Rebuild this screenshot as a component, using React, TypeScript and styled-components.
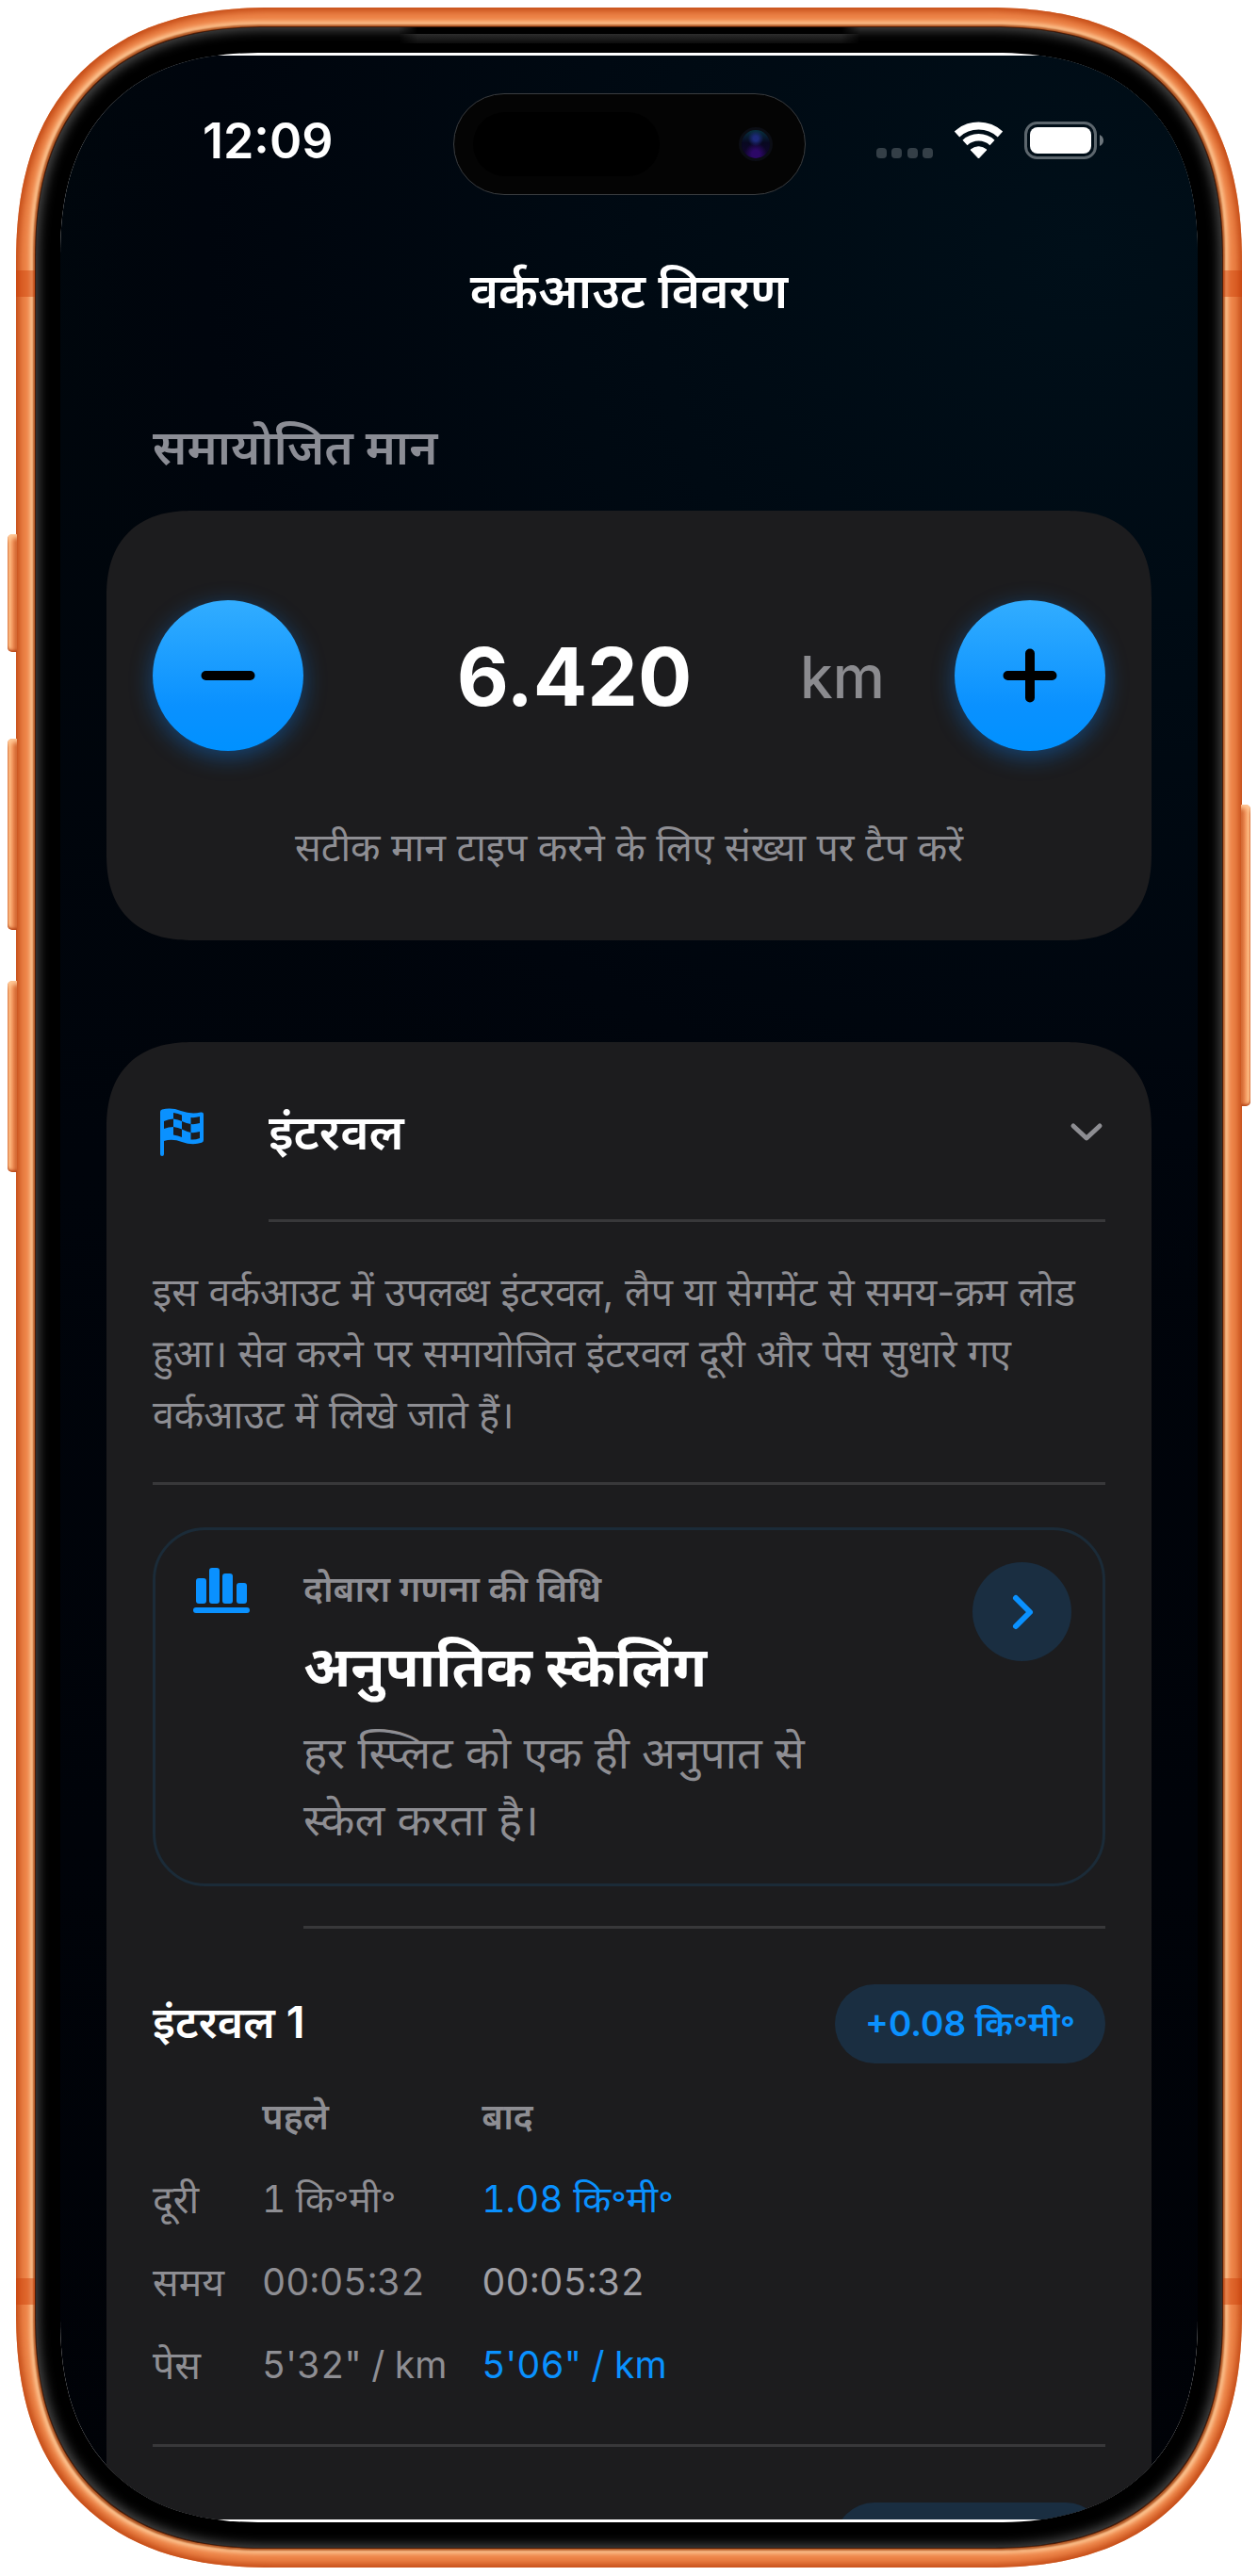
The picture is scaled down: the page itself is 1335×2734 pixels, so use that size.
import React from "react";
import styled, { createGlobalStyle, css } from "styled-components";

const blue = "#0a91ff";
const gray = "#8e8e93";
const tint = "#1a2e41";
const line = "#38383a";

const GlobalStyle = createGlobalStyle`
  *, *::before, *::after { box-sizing: border-box; }
  body {
    margin: 0;
    background: #fff;
    color: #fff;
    font-family: Inter, "Noto Sans Devanagari", "Noto Sans", "Lohit Devanagari", sans-serif;
    -webkit-font-smoothing: antialiased;
  }
  h1, h2, h3, p { margin: 0; }
  button, input { font: inherit; color: inherit; border: 0; margin: 0; padding: 0; }
  button { cursor: pointer; }
  svg { display: block; }
`;

// Continuous corners where the browser can draw them, plain arcs elsewhere.
const corners = (arc: number, smooth: number) => css`
  border-radius: ${arc}px;
  @supports (corner-shape: superellipse(1.25)) {
    border-radius: ${smooth}px;
    corner-shape: superellipse(1.25);
  }
`;

const Stage = styled.div`
  display: flex;
  height: 100vh;
  padding: 8px 17px 9px;
`;

const Phone = styled.div`
  position: relative;
  flex: 1;
  display: flex;
  padding: 21px;
  ${corners(240, 272)}
  background: #ee8549;
  box-shadow: inset 0 0 7px 4px #c44c17;
`;

const SideKey = styled.div<{ $side: "left" | "right"; $top: number; $height: number }>`
  position: absolute;
  top: ${(p) => p.$top}px;
  ${(p) => p.$side}: -9px;
  width: 10px;
  height: ${(p) => p.$height}px;
  border-radius: ${(p) => (p.$side === "left" ? "5px 0 0 5px" : "0 5px 5px 0")};
  background: linear-gradient(
    to ${(p) => p.$side},
    #c9551f,
    #f0925a 45%,
    #ffbd83 80%,
    #d4682f
  );
  box-shadow: inset 0 -4px 3px -2px #b8481a, inset 0 6px 5px -2px #ffc896;
`;

const Antenna = styled.div<{ $side: "left" | "right"; $edge: "top" | "bottom" }>`
  position: absolute;
  ${(p) => p.$side}: 0;
  ${(p) => p.$edge}: 279px;
  width: 20px;
  height: 28px;
  background: rgba(205, 62, 6, 0.45);
`;

const Bezel = styled.div`
  position: relative;
  flex: 1;
  display: flex;
  padding: 27px 26px;
  ${corners(219, 246)}
  background: #000;
  box-shadow: 0 0 0 1px #4a1c08, 0 0 2px 3px #b55a26, 0 0 5px 6px #ffcd9a,
    inset 0 0 12px 3px #4a4a4a;
`;

const Earpiece = styled.div`
  position: absolute;
  top: 0;
  left: 50%;
  width: 490px;
  height: 17px;
  transform: translateX(-50%);
  border-top: 7px solid #000;
  background: linear-gradient(#2c2c2c, #0c0c0c);
  mask-image: linear-gradient(to right, transparent, #000 20px calc(100% - 20px), transparent);
`;

const Glass = styled.div`
  flex: 1;
  display: flex;
  min-width: 0;
  padding: 3px 0;
  ${corners(186, 216)}
  overflow: hidden;
  background: #fff;
`;

const Screen = styled.div`
  flex: 1;
  min-width: 0;
  padding-top: 40px;
  overflow: hidden;
  background: radial-gradient(ellipse 1100px 1100px at 90% 8%, #000f19, #00050d 85%, transparent),
    linear-gradient(#00070d, #00040b 45%, #000207);
`;

const StatusBar = styled.div`
  display: grid;
  grid-template-columns: 1fr 374px 1fr;
  height: 108px;
`;

const Time = styled.div`
  display: flex;
  align-items: center;
  justify-content: center;
  padding: 0 0 8px 24px;
  font-size: 52px;
  font-weight: 600;
`;

const StatusIcons = styled.div`
  display: flex;
  align-items: center;
  justify-content: center;
  padding: 0 24px 8px 0;
`;

const Island = styled.div`
  display: flex;
  align-items: center;
  justify-content: space-between;
  padding: 0 34px 0 20px;
  border-radius: 54px;
  background: #040404;
  border: 1px solid #3a3d40;
`;

const Sensor = styled.div`
  width: 198px;
  height: 68px;
  border-radius: 34px;
  background: #000;
`;

const Lens = styled.div`
  width: 36px;
  height: 36px;
  border: 3px solid #0b0d14;
  border-radius: 50%;
  background: radial-gradient(circle at 50% 30%, #1d2a7a 0 10%, transparent 32%),
    radial-gradient(circle at 50% 85%, #2c0866 0 14%, transparent 40%),
    linear-gradient(#08303f, #080820 45%, #120530);
`;

const Title = styled.h1`
  margin-top: 66px;
  font-size: 52px;
  line-height: 72px;
  font-weight: 600;
  text-align: center;
`;

const Main = styled.main`
  padding: 0 49px;
`;

const SectionTitle = styled.h2`
  padding: 94px 49px 31px;
  color: #8b8d95;
  font-size: 51px;
  line-height: 72px;
  font-weight: 600;
`;

const Card = styled.section`
  padding: 0 49px;
  ${corners(82, 92)}
  background: #1c1c1e;
  & + & { margin-top: 108px; }
`;

const Stepper = styled.div`
  display: flex;
  align-items: center;
  padding-top: 95px;
`;

const RoundButton = styled.button`
  display: grid;
  place-items: center;
  flex: none;
  width: 160px;
  height: 160px;
  border-radius: 50%;
  background: linear-gradient(#32adff, #0a91ff 70%, #0091ff);
  box-shadow: 0 6px 24px rgba(10, 132, 255, 0.4);
`;

const ValueInput = styled.input`
  flex: 1;
  min-width: 0;
  margin-left: 48px;
  padding-top: 4px;
  background: transparent;
  color: #fff;
  font-size: 85px;
  line-height: 100px;
  font-weight: 700;
  text-align: center;
  outline: 0;
`;

const Unit = styled.label`
  flex: none;
  width: 116px;
  margin-right: 48px;
  padding-top: 4px;
  color: #8b8b8f;
  font-size: 62px;
  line-height: 100px;
  font-weight: 500;
`;

const Hint = styled.p`
  padding: 68px 0 64px;
  color: ${gray};
  font-size: 41px;
  line-height: 69px;
  text-align: center;
`;

const CardHeader = styled.button`
  display: flex;
  align-items: center;
  width: 100%;
  height: 188px;
  padding-top: 4px;
  background: none;
  text-align: left;
`;

const HeaderIcon = styled.span`
  width: 123px;
  padding-left: 8px;
`;

const HeaderText = styled.span`
  flex: 1;
  font-size: 52px;
  line-height: 72px;
  font-weight: 600;
`;

const Divider = styled.hr<{ $inset?: number }>`
  height: 3px;
  margin: 0 0 0 ${(p) => p.$inset ?? 0}px;
  border: 0;
  background: ${line};
`;

const Note = styled.p`
  padding: 42px 0 39px;
  color: ${gray};
  font-size: 41px;
  line-height: 65px;
`;

const Method = styled.button`
  display: flex;
  align-items: flex-start;
  width: 100%;
  margin: 45px 0 42px;
  padding: 34px 33px 33px 40px;
  border: 3px solid #1b2b38;
  border-radius: 56px;
  background: none;
  text-align: left;
`;

const MethodIcon = styled.span`
  flex: none;
  width: 117px;
  padding-top: 5px;
`;

const MethodText = styled.span`
  flex: 1;
  display: flex;
  flex-direction: column;
  min-width: 0;
  padding-right: 160px;
`;

const MethodLabel = styled.span`
  color: ${gray};
  font-size: 38px;
  line-height: 56px;
  font-weight: 600;
`;

const MethodName = styled.span`
  font-size: 59px;
  line-height: 110px;
  font-weight: 700;
`;

const MethodNote = styled.span`
  color: ${gray};
  font-size: 47px;
  line-height: 71px;
`;

const Go = styled.span`
  display: grid;
  place-items: center;
  flex: none;
  width: 105px;
  height: 105px;
  border-radius: 50%;
  background: ${tint};
`;

const IntervalHead = styled.div`
  display: flex;
  align-items: center;
  justify-content: space-between;
  padding-top: 59px;
`;

const IntervalName = styled.h3`
  padding-bottom: 4px;
  font-size: 47px;
  line-height: 64px;
  font-weight: 600;
`;

const Pill = styled.span`
  display: grid;
  place-items: center;
  min-width: 287px;
  height: 84px;
  padding: 0 32px;
  border-radius: 42px;
  background: ${tint};
  color: ${blue};
  font-size: 37px;
  line-height: 60px;
  font-weight: 600;
`;

const Table = styled.table`
  margin: 12px 0 40px;
  border-collapse: collapse;
  color: ${gray};
  font-size: 39px;
  line-height: 88px;
  font-variant-numeric: tabular-nums;
  th, td {
    height: 88px;
    padding: 0 37px 0 0;
    font-weight: 400;
    text-align: left;
    white-space: nowrap;
  }
  tbody th {
    padding-right: 40px;
    font-size: 41px;
  }
  thead th {
    font-size: 38px;
    font-weight: 600;
  }
`;

const Cell = styled.td<{ $tone?: "changed" | "same" }>`
  color: ${(p) => (p.$tone === "changed" ? blue : p.$tone === "same" ? "#a0a0a6" : gray)};
`;

const rows = [
  { name: "दूरी", before: "1 कि॰मी॰", after: "1.08 कि॰मी॰", changed: true },
  { name: "समय", before: "00:05:32", after: "00:05:32", changed: false },
  { name: "पेस", before: `5'32" / km`, after: `5'06" / km`, changed: true },
];

const StatusGlyphs = () => (
  <svg width="242" height="42" viewBox="0 0 242 42" aria-hidden="true">
    {[0, 16, 33, 49].map((x) => (
      <rect key={x} x={x} y="29" width="11" height="11" rx="4" fill="#343f47" />
    ))}
    <g fill="none" stroke="#fff">
      <path d="M85.500 14.500 A34 34 0 0 1 131.500 14.500" strokeWidth="8" />
      <path d="M94 23.500 A21.500 21.500 0 0 1 123 23.500" strokeWidth="7.500" />
    </g>
    <path d="M108.500 40 L100 31 Q108.500 24.500 117 31 Z" fill="#fff" stroke="#fff" strokeLinejoin="round" />
    <rect x="158.500" y="2.500" width="74" height="37" rx="12" fill="none" stroke="#5c666d" strokeWidth="3" />
    <rect x="163" y="7" width="65" height="28" rx="8" fill="#fff" />
    <path d="M237 15 Q241 17 241 21 Q241 25 237 27 Z" fill="#6d767c" />
  </svg>
);

const Flag = () => (
  <svg width="48" height="52" viewBox="0 0 48 52" aria-hidden="true">
    <path
      d="M0 4 Q0 2 2 1.500 Q12 -1 22 3 Q33 7 43 4.500 Q46 4 46 6.500 V34 Q46 36 44 36.800 Q34 40 23 36 Q13 32 4 35 V49 Q4 51 2 51 Q0 51 0 49 Z"
      fill={blue}
    />
    <g fill="#1c1c1e">
      <path d="M14 5 Q19 5.500 23 7.500 V14 Q19 12 14 11.500 Z" />
      <path d="M32.500 10 Q37 10.500 42 9 V16 Q37 17.500 32.500 17 Z" />
      <path d="M4 14 Q9 11.500 14 11.500 V20 Q9 20 4 22 Z" />
      <path d="M23 14 Q28 16.500 32.500 17 V26 Q28 25 23 22.500 Z" />
      <path d="M14 20 Q19 20.500 23 22.500 V31 Q19 29 14 28.500 Z" />
      <path d="M32.500 26 Q37 26.500 42 25 V32 Q37 34 32.500 33.500 Z" />
    </g>
  </svg>
);

const Bars = () => (
  <svg width="60" height="50" viewBox="0 0 60 50" fill={blue} aria-hidden="true">
    <rect x="3" y="12" width="11" height="27" rx="3" />
    <rect x="17" y="1" width="11" height="38" rx="3" />
    <rect x="31" y="7" width="11" height="32" rx="3" />
    <rect x="46" y="17" width="11" height="22" rx="3" />
    <rect x="0" y="43" width="60" height="6" rx="3" />
  </svg>
);

export default function App() {
  return (
    <>
      <GlobalStyle />
      <Stage>
        <Phone>
          <SideKey $side="left" $top={559} $height={125} />
          <SideKey $side="left" $top={776} $height={203} />
          <SideKey $side="left" $top={1033} $height={203} />
          <SideKey $side="right" $top={846} $height={320} />
          <Bezel>
            <Earpiece />
            <Glass>
              <Screen>
                <StatusBar>
                  <Time>12:09</Time>
                  <Island>
                    <Sensor />
                    <Lens />
                  </Island>
                  <StatusIcons>
                    <StatusGlyphs />
                  </StatusIcons>
                </StatusBar>
                <Title>वर्कआउट विवरण</Title>
                <Main>
                  <SectionTitle>समायोजित मान</SectionTitle>
                  <Card>
                    <Stepper>
                      <RoundButton type="button" aria-label="−">
                        <svg width="58" height="58" viewBox="0 0 58 58" aria-hidden="true">
                          <path d="M5.500 29 H52.500" stroke="#000" strokeWidth="10" strokeLinecap="round" />
                        </svg>
                      </RoundButton>
                      <ValueInput id="distance" inputMode="decimal" size={1} defaultValue="6.420" />
                      <Unit htmlFor="distance">km</Unit>
                      <RoundButton type="button" aria-label="+">
                        <svg width="58" height="58" viewBox="0 0 58 58" aria-hidden="true">
                          <path d="M5.500 29 H52.500 M29 5.500 V52.500" stroke="#000" strokeWidth="10" strokeLinecap="round" />
                        </svg>
                      </RoundButton>
                    </Stepper>
                    <Hint>सटीक मान टाइप करने के लिए संख्या पर टैप करें</Hint>
                  </Card>
                  <Card>
                    <CardHeader type="button" aria-expanded="true">
                      <HeaderIcon>
                        <Flag />
                      </HeaderIcon>
                      <HeaderText>इंटरवल</HeaderText>
                      <svg width="40" height="24" viewBox="0 0 40 24" fill="none" aria-hidden="true">
                        <path d="M6 5 L20 18 L34 5" stroke={gray} strokeWidth="5" strokeLinecap="round" strokeLinejoin="round" />
                      </svg>
                    </CardHeader>
                    <Divider $inset={123} />
                    <Note>
                      इस वर्कआउट में उपलब्ध इंटरवल, लैप या सेगमेंट से समय-क्रम लोड हुआ। सेव करने पर समायोजित
                      इंटरवल दूरी और पेस सुधारे गए वर्कआउट में लिखे जाते हैं।
                    </Note>
                    <Divider />
                    <Method type="button">
                      <MethodIcon>
                        <Bars />
                      </MethodIcon>
                      <MethodText>
                        <MethodLabel>दोबारा गणना की विधि</MethodLabel>
                        <MethodName>अनुपातिक स्केलिंग</MethodName>
                        <MethodNote>हर स्प्लिट को एक ही अनुपात से स्केल करता है।</MethodNote>
                      </MethodText>
                      <Go>
                        <svg width="28" height="42" viewBox="0 0 28 42" fill="none" aria-hidden="true">
                          <path d="M7 6 L22 21 L7 36" stroke={blue} strokeWidth="6" strokeLinecap="round" strokeLinejoin="round" />
                        </svg>
                      </Go>
                    </Method>
                    <Divider $inset={160} />
                    <IntervalHead>
                      <IntervalName>इंटरवल 1</IntervalName>
                      <Pill>+0.08 कि॰मी॰</Pill>
                    </IntervalHead>
                    <Table>
                      <thead>
                        <tr>
                          <td />
                          <th scope="col">पहले</th>
                          <th scope="col">बाद</th>
                        </tr>
                      </thead>
                      <tbody>
                        {rows.map((row) => (
                          <tr key={row.name}>
                            <th scope="row">{row.name}</th>
                            <Cell>{row.before}</Cell>
                            <Cell $tone={row.changed ? "changed" : "same"}>{row.after}</Cell>
                          </tr>
                        ))}
                      </tbody>
                    </Table>
                    <Divider />
                    <IntervalHead>
                      <IntervalName />
                      <Pill />
                    </IntervalHead>
                  </Card>
                </Main>
              </Screen>
            </Glass>
          </Bezel>
          <Antenna $side="left" $edge="top" />
          <Antenna $side="right" $edge="top" />
          <Antenna $side="left" $edge="bottom" />
          <Antenna $side="right" $edge="bottom" />
        </Phone>
      </Stage>
    </>
  );
}
